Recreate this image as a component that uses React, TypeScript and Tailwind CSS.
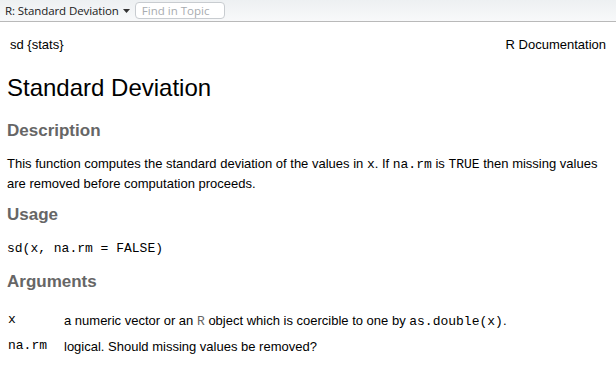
import React from "react";

const mono = { fontFamily: '"Liberation Mono", "Courier New", monospace' };

function Code({ children }: { children: React.ReactNode }) {
  return <span className="font-['Liberation_Mono',monospace] text-[13px] leading-none">{children}</span>;
}

export default function App() {
  return (
    <div className="w-[616px] h-[368px] bg-white overflow-hidden font-['Liberation_Sans',Arial,sans-serif] text-black">
      <div className="h-[22px] flex items-center border-b border-[#b9b9b9] bg-gradient-to-b from-[#edf0f2] to-[#f8f9fa] pl-[5px]">
        <span className="font-['Open_Sans','Noto_Sans',sans-serif] text-[11.5px] text-[#1a1a1a] tracking-[-0.1px]">R: Standard Deviation</span>
        <svg width="7" height="4" viewBox="0 0 7 4" className="ml-[4px] mt-[1px]">
          <path d="M0 0 L7 0 L3.5 4 Z" fill="#333" />
        </svg>
        <div className="ml-[5px] w-[90px] h-[17px] rounded-[4px] border border-[#c8ccd0] bg-white flex items-center pl-[6px]">
          <span className="font-['Open_Sans','Noto_Sans',sans-serif] text-[11.5px] text-[#a8acb0]">Find in Topic</span>
        </div>
      </div>
      <div className="px-[7px]">
        <div className="flex justify-between text-[13px] pt-[13px] pl-[3px] pr-[3px]">
          <span>sd {"{stats}"}</span>
          <span>R Documentation</span>
        </div>
        <h1 className="text-[24px] leading-[28px] mt-[19px]">Standard Deviation</h1>
        <h2 className="text-[17px] font-bold text-[#666] mt-[19px] leading-[20px]">Description</h2>
        <p className="text-[13px] leading-[20px] mt-[13px]">
          This function computes the standard deviation of the values in <Code>x</Code>. If <Code>na.rm</Code> is <Code>TRUE</Code> then missing values are removed before computation proceeds.
        </p>
        <h2 className="text-[17px] font-bold text-[#666] mt-[11px] leading-[20px]">Usage</h2>
        <pre className="text-[13px] mt-[16px] leading-[16px]" style={mono}>sd(x, na.rm = FALSE)</pre>
        <h2 className="text-[17px] font-bold text-[#666] mt-[15px] leading-[20px]">Arguments</h2>
        <div className="mt-[21px] grid grid-cols-[56px_1fr] gap-y-[10px] text-[13px] leading-[16px] pl-[1px]">
          <Code>x</Code>
          <span>a numeric vector or an <span className="text-[#666]"><Code>R</Code></span> object which is coercible to one by <Code>as.double(x)</Code>.</span>
          <Code>na.rm</Code>
          <span>logical. Should missing values be removed?</span>
        </div>
      </div>
    </div>
  );
}
